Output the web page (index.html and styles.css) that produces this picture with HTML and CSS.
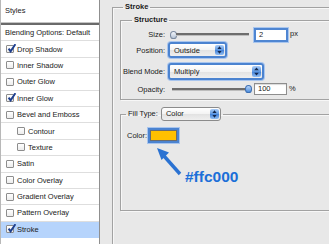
FILE: index.html
```html
<!DOCTYPE html>
<html lang="en">
<head>
    <meta charset="UTF-8">
    <meta name="viewport" content="width=device-width, initial-scale=1.0">
    <title>Layer Style - Stroke</title>
    <link rel="stylesheet" href="styles.css">
</head>
<body>
    <div class="window">
        <aside class="styles-panel">
            <div class="panel-head">Styles</div>
            <ul class="style-list">
                <li class="style-item title">Blending Options: Default</li>
                <li class="style-item"><span class="check on"><svg viewBox="0 0 9 9"><path d="M1.6 4.6 L3.6 7.4 L8.4 0.2"/></svg></span>Drop Shadow</li>
                <li class="style-item"><span class="check"></span>Inner Shadow</li>
                <li class="style-item"><span class="check"></span>Outer Glow</li>
                <li class="style-item"><span class="check on"><svg viewBox="0 0 9 9"><path d="M1.6 4.6 L3.6 7.4 L8.4 0.2"/></svg></span>Inner Glow</li>
                <li class="style-item"><span class="check"></span>Bevel and Emboss</li>
                <li class="style-item sub"><span class="check"></span>Contour</li>
                <li class="style-item sub"><span class="check"></span>Texture</li>
                <li class="style-item"><span class="check"></span>Satin</li>
                <li class="style-item"><span class="check"></span>Color Overlay</li>
                <li class="style-item"><span class="check"></span>Gradient Overlay</li>
                <li class="style-item"><span class="check"></span>Pattern Overlay</li>
                <li class="style-item selected"><span class="check on"><svg viewBox="0 0 9 9"><path d="M1.6 4.6 L3.6 7.4 L8.4 0.2"/></svg></span>Stroke</li>
            </ul>
        </aside>

        <main class="options">
            <fieldset class="group stroke-group">
                <legend>Stroke</legend>

                <fieldset class="group structure">
                    <legend>Structure</legend>

                    <div class="field size-field">
                        <span class="field-label">Size:</span>
                        <div class="slider size-slider">
                            <span class="knob"></span>
                            <span class="track"></span>
                        </div>
                        <span class="num-box focus">2</span>
                        <span class="unit">px</span>
                    </div>

                    <div class="field position-field">
                        <span class="field-label">Position:</span>
                        <div class="select focus position-select">
                            <span class="select-text">Outside</span>
                            <span class="stepper"><svg viewBox="0 0 8 11"><path d="M4 1.5 L6.3 4.3 H1.7Z M4 9.5 L6.3 6.7 H1.7Z"/></svg></span>
                        </div>
                    </div>

                    <div class="field blend-field">
                        <span class="field-label">Blend Mode:</span>
                        <div class="select focus blend-select">
                            <span class="select-text">Multiply</span>
                            <span class="stepper"><svg viewBox="0 0 8 11"><path d="M4 1.5 L6.3 4.3 H1.7Z M4 9.5 L6.3 6.7 H1.7Z"/></svg></span>
                        </div>
                    </div>

                    <div class="field opacity-field">
                        <span class="field-label">Opacity:</span>
                        <div class="slider opacity-slider">
                            <span class="track"></span>
                            <span class="knob blue"></span>
                        </div>
                        <span class="num-box">100</span>
                        <span class="unit">%</span>
                    </div>
                </fieldset>

                <fieldset class="group fill">
                    <legend>
                        <span class="fill-label">Fill Type:</span>
                        <span class="select fill-select">
                            <span class="select-text">Color</span>
                            <span class="stepper"><svg viewBox="0 0 8 11"><path d="M4 1.5 L6.3 4.3 H1.7Z M4 9.5 L6.3 6.7 H1.7Z"/></svg></span>
                        </span>
                    </legend>

                    <div class="color-row">
                        <span>Color:</span>
                        <span class="swatch"></span>
                    </div>

                    <!-- annotation -->
                    <svg class="note-arrow" viewBox="0 0 30 32">
                        <path d="M26 29 L10 11" class="shaft"/>
                        <path d="M3 3 L15 7.5 L7.5 15 Z" class="head"/>
                    </svg>
                    <span class="hex-note">#ffc000</span>
                </fieldset>
            </fieldset>
        </main>
    </div>
</body>
</html>
```

FILE: styles.css
```css
* {
    box-sizing: border-box;
}

body {
    margin: 0;
    background-color: #e8e8e8;
    font-family: "Liberation Sans", Arial, sans-serif;
    font-size: 7.5px;
    color: #1a1a1a;
    overflow: hidden;
}

.window {
    display: flex;
    width: 329px;
    height: 244px;
    overflow: hidden;
}

/* left list */
.styles-panel {
    flex: none;
    width: 100px;
    background-color: #fff;
    border-left: 1px solid #b8b8b8;
    border-right: 1px solid #8f8f8f;
}

.panel-head {
    height: 25px;
    padding-left: 4px;
    line-height: 22px;
    border-bottom: 2px solid #6a6a6a;
    box-shadow: inset 0 -1px 0 #c4c4c4;
}

.style-list {
    list-style: none;
    margin: 0;
    padding: 0;
}

.style-item {
    display: flex;
    align-items: center;
    height: 16.4px;
    padding-left: 5px;
    border-bottom: 1px solid #dedede;
    white-space: nowrap;
}

.style-item.title {
    padding-left: 4px;
}

.style-item.sub {
    padding-left: 16px;
}

.style-item.selected {
    background-color: #b6d4fc;
    border-bottom-color: #b6d4fc;
}

.check {
    position: relative;
    flex: none;
    width: 8px;
    height: 8px;
    margin-right: 3px;
    border: 1px solid #8d8d8d;
    border-radius: 1px;
    background: linear-gradient(#fff, #ececec);
}

.check svg {
    position: absolute;
    left: 0;
    top: -2px;
    width: 9px;
    height: 9px;
}

.check svg path {
    fill: none;
    stroke: #1e3f8e;
    stroke-width: 1.9;
}

/* right side */
.options {
    flex: none;
    width: 260px;
    padding: 2px 0 0 12px;
}

.group {
    margin: 0;
    min-width: 0;
    border: 1px solid #a2a2a2;
    box-shadow: 1px 1px 0 #f7f7f7, inset 1px 1px 0 #f7f7f7;
}

.group > legend {
    padding: 0 2px;
    line-height: 10px;
    font-weight: bold;
}

.stroke-group {
    width: 250px;
    height: 260px;
    padding: 3px 0 0 7px;
    border-right: none;
}

.stroke-group > legend {
    margin-left: 3px;
}

.structure {
    padding: 0 0 4px 0;
    border-right: none;
}

.structure > legend {
    margin-left: 11px;
}

.field {
    display: flex;
    align-items: center;
}

.field-label {
    flex: none;
    width: 44px;
    margin-right: 3px;
    text-align: right;
}

.size-field {
    height: 13px;
    margin-top: 3px;
}

.position-field {
    height: 16px;
    margin-top: 1px;
}

.blend-field {
    height: 17px;
    margin-top: 5px;
}

.opacity-field {
    height: 12px;
    margin-top: 3px;
}

/* slider */
.slider {
    display: flex;
    align-items: center;
    height: 10px;
}

.size-slider {
    width: 79px;
    margin-left: 2px;
}

.opacity-slider {
    width: 84px;
    padding-left: 4px;
}

.track {
    flex: 1;
    height: 2px;
    background-color: #6d6d6d;
    border-bottom: 1px solid #bdbdbd;
    box-sizing: content-box;
}

.knob {
    flex: none;
    width: 7px;
    height: 8px;
    border: 1px solid #7b8aa0;
    border-radius: 50% 50% 45% 45%;
    background: linear-gradient(#f4f7fb, #b9c6d8);
}

.size-slider .knob {
    margin-right: -1px;
}

.knob.blue {
    margin-left: -1px;
    border-color: #3d6fb3;
    background: linear-gradient(#b8d6fa, #4f8fde);
}

.num-box {
    flex: none;
    width: 34px;
    height: 12px;
    padding-left: 3px;
    line-height: 10px;
    background-color: #fff;
    border: 1px solid #8e8e8e;
    box-shadow: inset 0 1px 1px rgba(0, 0, 0, 0.15);
}

.size-field .num-box {
    margin-left: 5px;
}

.opacity-field .num-box {
    margin-left: 2px;
    width: 33px;
}

.num-box.focus {
    height: 14px;
    line-height: 10px;
    border: 2px solid #4f86d2;
    box-shadow: 0 0 0 1px #a9c6ee;
}

.unit {
    margin-left: 2px;
    margin-bottom: 2px;
}

/* popup buttons */
.select {
    display: flex;
    align-items: center;
    padding-left: 4px;
    border: 1px solid #8b8b8b;
    border-radius: 3px;
    background: linear-gradient(#ffffff, #f3f3f3 50%, #e2e2e2 51%, #efefef);
    font-weight: normal;
}

.select.focus {
    border: 2px solid #4b83d0;
    box-shadow: 0 0 0 1px #a8c5ee;
}

.position-select {
    width: 59px;
    height: 16px;
}

.blend-select {
    width: 96px;
    height: 17px;
}

.select-text {
    flex: 1;
}

.stepper {
    display: flex;
    flex: none;
    width: 9px;
    height: calc(100% - 2px);
    margin-right: 1px;
    border-radius: 2px;
    background: linear-gradient(#a9cbf6, #5d98e2 50%, #3f7fd6 51%, #8fbcf2);
}

.stepper svg {
    width: 9px;
    height: 100%;
}

.stepper svg path {
    fill: #14284d;
}

/* fill type */
.fill {
    position: relative;
    height: 104px;
    margin-top: 7px;
    padding: 0;
    border-right: none;
}

.fill > legend {
    display: flex;
    align-items: center;
    margin-left: 5px;
    line-height: 14px;
    font-weight: normal;
}

.fill-label {
    margin-right: 3px;
}

.fill-select {
    width: 60px;
    height: 14px;
}

.color-row {
    display: flex;
    align-items: center;
    margin-top: 7px;
    padding-left: 6px;
}

.swatch {
    width: 31px;
    height: 15px;
    margin-left: 1px;
    border: 2px solid #4b83d0;
    background-color: #ffc000;
    box-shadow: inset 0 0 0 1px #6b6b6b, 0 0 0 1px #a8c5ee;
}

.note-arrow {
    position: absolute;
    left: 33px;
    top: 24px;
    width: 30px;
    height: 32px;
}

.note-arrow .shaft {
    stroke: #2a72d2;
    stroke-width: 3.4;
    fill: none;
}

.note-arrow .head {
    fill: #2a72d2;
}

.hex-note {
    position: absolute;
    left: 64px;
    top: 48px;
    font-size: 15.5px;
    line-height: 16px;
    font-weight: bold;
    color: #1b6fd8;
}
```
